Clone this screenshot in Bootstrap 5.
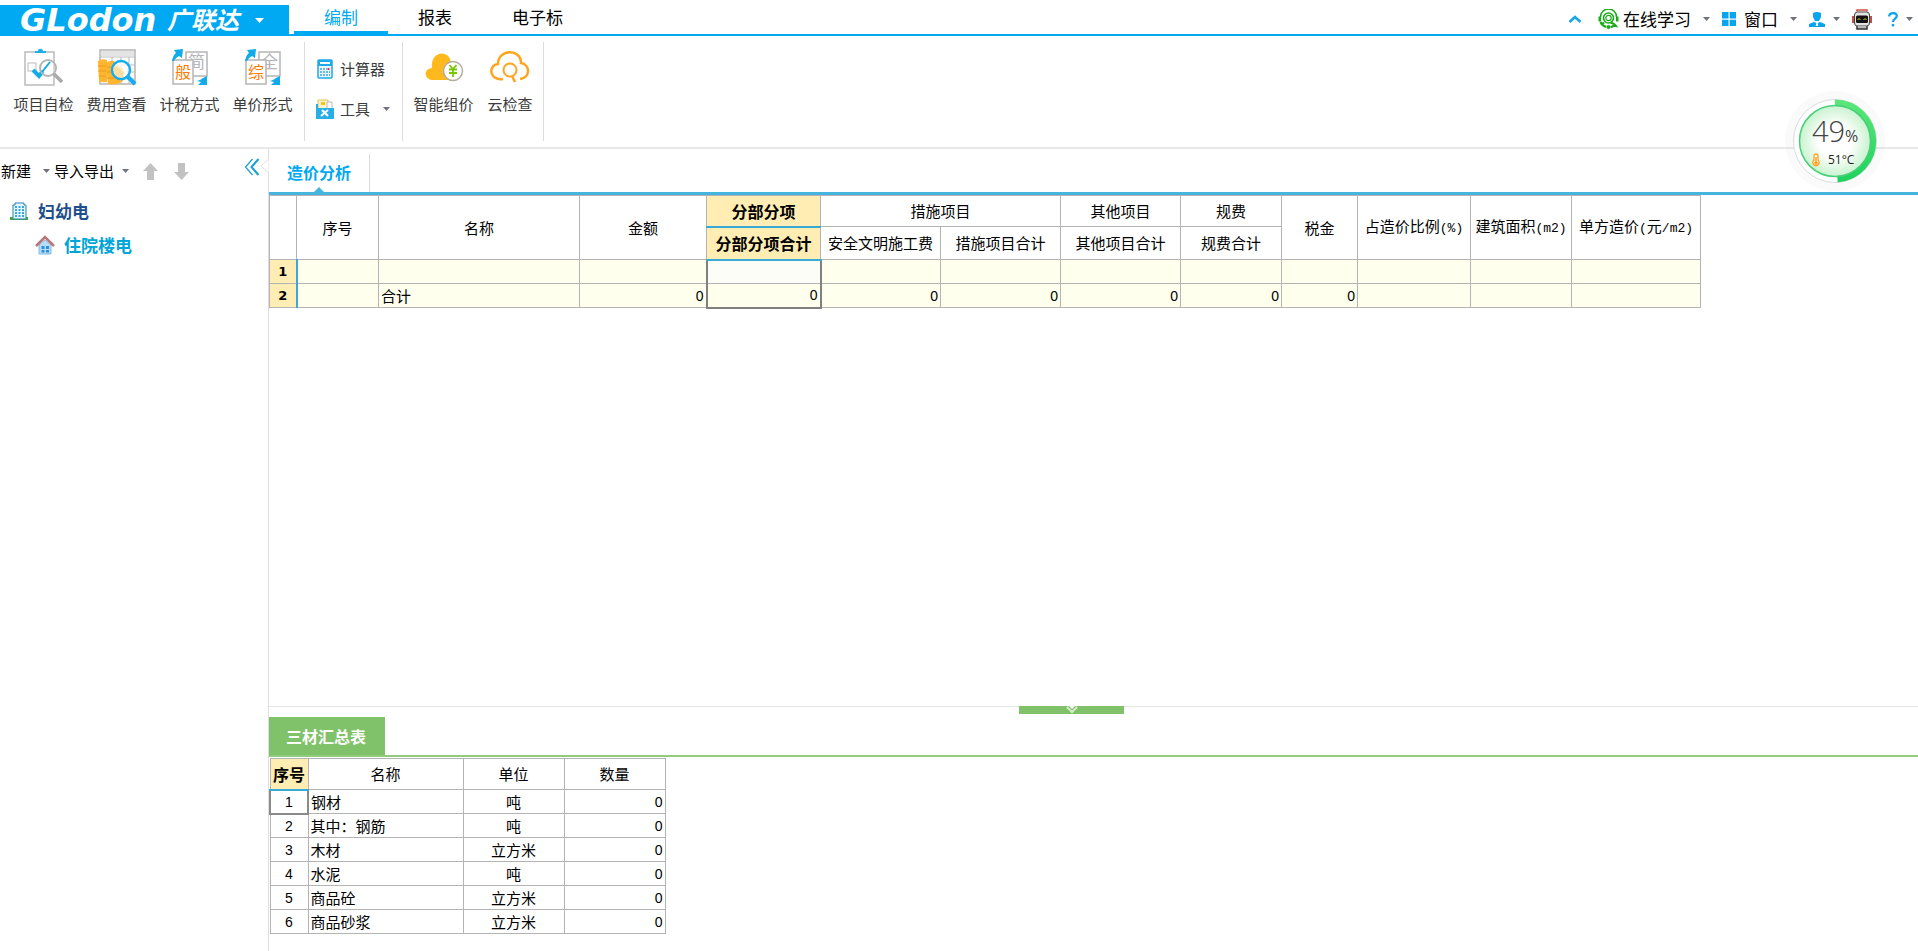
<!DOCTYPE html>
<html lang="zh-CN">
<head>
<meta charset="utf-8">
<meta name="viewport" content="width=device-width, initial-scale=1">
<title>广联达 - 造价分析</title>
<link rel="stylesheet" href="https://cdn.jsdelivr.net/npm/bootstrap@5.3.0/dist/css/bootstrap.min.css">
<style>
  :root { --brand: #00a9f1; --line: #e4e4e4; --grid: #b4b4b4; --sel: #ffedb3; }
  body { font-family: "Noto Sans CJK SC", sans-serif; font-size: 15px; line-height: 20px; color: #000; background: #fff; }
  a { color: inherit; text-decoration: none; }
  button { font: inherit; color: inherit; background: none; border: 0; padding: 0; }
  svg { display: block; flex: none; }
  .tri { width: 7px; height: 4px; flex: none; background: #6f7280; clip-path: polygon(0 0, 100% 0, 50% 100%); }
  .tri-white { width: 9px; height: 5px; background: #fff; }

  .app-head { height: 36px; border-bottom: 2px solid var(--brand); }
  .brand-btn { height: 31px; width: 289px; margin-bottom: -2px; background: var(--brand); color: #fff; padding-left: 20px; }
  .brand-latin { font: italic bold 32px/31px "DejaVu Sans", sans-serif; width: 147px; text-align: left; }
  .brand-cjk { font-size: 24px; line-height: 24px; padding-bottom: 3px; font-weight: bold; font-style: italic; }
  .main-tabs { margin-left: 5px; font-size: 17px; }
  .main-tabs a { padding: 0 30px; height: 31px; line-height: 28px; border-bottom: 3px solid transparent; }
  .main-tabs a.active { color: var(--brand); border-color: var(--brand); }
  .head-tools { font-size: 17px; height: 30px; padding-right: 5px; gap: 12px; }

  .ribbon { height: 113px; border-bottom: 2px solid #e9e9e9; padding: 6px 0; color: #3c3c3c; }
  .ribbon-group { border-right: 1px solid #dcdcdc; height: 99px; }
  .group-main { padding: 0 5px 0 7px; }
  .group-tools { width: 98px; padding: 17px 8px 0 10px; gap: 20px; }
  .group-cloud { width: 141px; padding-left: 4px; }
  .tool-lg { width: 73px; padding-top: 6px; }
  .tool-lg svg { margin-bottom: 8px; }
  .tool-narrow { width: 60px; }
  .tool-sm { height: 20px; gap: 5px; }

  .side { width: 268px; }
  .side-bar { height: 44px; padding-left: 1px; gap: 4px; }
  .side-arrows { gap: 16px; margin-left: 10px; }
  .tree { font-size: 17px; line-height: 24px; font-weight: bold; }
  .tree-root { color: #1f4e8c; padding-top: 6px; margin-bottom: 6px; }
  .tree-leaf { color: #00a5d8; padding-top: 4px; }
  .work { border-left: 1px solid #dedede; min-width: 0; }
  .work-tabs { height: 46px; padding-top: 5px; border-bottom: 3px solid #45b5e0; }
  .work-tab { width: 101px; padding-bottom: 2px; font-size: 16px; font-weight: bold; color: var(--brand); border-right: 1px solid #dcdcdc; }
  .tab-mark { bottom: 0; left: 45px; width: 10px; height: 5px; background: #45b5e0; clip-path: polygon(50% 0, 100% 100%, 0 100%); }
  .notch { right: -1px; top: 8px; }

  .sheet { table-layout: fixed; border-collapse: collapse; color: #000; margin: 0; }
  .sheet > :not(caption) > * > * { border: 1px solid var(--grid); padding: 0 2px; height: 24px; line-height: 20px; font-weight: normal; vertical-align: middle; white-space: nowrap; background: transparent; box-shadow: none; color: #000; }
  .sheet th { text-align: center; }
  .unit { font-family: "Liberation Mono", "Noto Sans CJK SC", monospace; font-size: 13px; }
  .num { font-family: "Liberation Sans", "Noto Sans CJK SC", sans-serif; font-size: 14px; }
  .cost { width: 1431px; }
  .c27 { width: 27px; } .c76 { width: 76px; } .c82 { width: 82px; } .c101 { width: 101px; }
  .c113 { width: 113px; } .c114 { width: 114px; } .c120 { width: 120px; } .c127 { width: 127px; }
  .c129 { width: 129px; } .c201 { width: 201px; } .c38 { width: 38px; } .c155 { width: 155px; }
  .sheet > thead > tr > th { height: 31px; }
  .cost > thead > tr + tr > th { height: 33px; }
  .cost > tbody > tr > td { background: #ffffee; }
  .sheet > * > tr > th.sel { background: var(--sel); font-weight: bold; font-size: 16px; border-bottom: 2px solid #3ba9d6; }
  .cost > tbody > tr > th { background: var(--sel); border-right: 2px solid #3ba9d6; font: bold 13px/20px "DejaVu Sans", sans-serif; }
  .cost > tbody > tr > td.pick { border-left: 2px solid #808080; border-right: 2px solid #808080; }
  .cost > tbody > tr:first-child > td.pick { background: #fdfdf8; }
  .cost > tbody > tr:last-child > td.pick { border-bottom: 2px solid #808080; }

  .lower { border-top: 1px solid #e4e4e4; padding-top: 10px; padding-bottom: 17px; }
  .handle { top: -1px; left: 45.5%; width: 105px; height: 8px; background: #80c269; }
  .lower-tabs { border-bottom: 2px solid #92ca7e; }
  .lower-tab { width: 116px; height: 38px; padding-right: 2px; background: #80c269; color: #fff; font-weight: bold; font-size: 16px; }
  .mats { width: 396px; margin-top: 1px; }
  .mats > tbody > tr > td.cur { border: 2px solid #8a8a8a; }

  .gauge { top: 91px; right: 33px; width: 100px; height: 100px; border-radius: 50%; background: rgba(0,0,0,.02); }
  .gauge-text { top: 24px; left: 27px; color: #444; }
  .gauge-big { font: 300 29px/32px "Open Sans", sans-serif; }
  .gauge-big small { font-size: 16px; font-weight: 400; }
  .gauge-temp { font: 12px/16px "Open Sans", sans-serif; color: #222; }
</style>
</head>
<body class="d-flex flex-column min-vh-100 position-relative">

<header class="app-head d-flex align-items-end">
  <button class="brand-btn d-flex align-items-center" type="button">
    <span class="brand-latin">GLodon</span><span class="brand-cjk">广联达</span><span class="tri tri-white ms-3"></span>
  </button>
  <nav class="main-tabs d-flex">
    <a href="#" class="active">编制</a><a href="#">报表</a><a href="#">电子标</a>
  </nav>
  <div class="head-tools d-flex align-items-center ms-auto">
    <button type="button" aria-label="收起" class="me-1"><svg width="14" height="8" viewBox="0 0 14 8"><path d="M1.500 7 7 2l5.500 5" fill="none" stroke="#19a5ec" stroke-width="2.600"/></svg></button>
    <button type="button" class="d-flex align-items-center gap-1">
      <svg width="21" height="21" viewBox="0 0 21 21" fill="none" stroke="#18ad18"><path d="M2.500 8a8 8 0 0 1 16 0" stroke-width="1.500"/><path d="M1.800 7.500v5M19.200 7.500v5" stroke-width="2.600"/><circle cx="10.500" cy="9" r="5" stroke-width="1.600"/><circle cx="10.500" cy="9" r="2.700" stroke-width="1.200"/><path d="M2.500 13c1 2.500 3 4 5.500 5M6 13.500c-1 .8-1.500 1.500-1.800 2.500M12.500 13.500c3 .8 4.500 2 5.500 3.500-2.500-.4-4 .3-5 1.500" stroke-width="2.200"/><circle cx="10.500" cy="18" r="1.600" fill="#18ad18"/></svg>
      <span>在线学习</span><span class="tri ms-2"></span>
    </button>
    <button type="button" class="d-flex align-items-center gap-2">
      <svg width="14" height="14" viewBox="0 0 14 14" fill="#08a4ee"><path d="M0 0h6.500v6.500H0zM7.700 0H14v6.500H7.700zM0 7.700h6.500V14H0zM7.700 7.700H14V14H7.700z"/></svg>
      <span>窗口</span><span class="tri ms-1"></span>
    </button>
    <button type="button" aria-label="用户" class="d-flex align-items-center gap-2">
      <svg width="16" height="15" viewBox="0 0 16 15" fill="#08a4ee"><path d="M4 1q4-2 8 0v4l-2 4H6L4 5zM0 15v-3l5-2 2.300 1-.6 3h2.600l-.6-3L11 10l5 2v3z"/></svg>
      <span class="tri"></span>
    </button>
    <button type="button" aria-label="机器人">
      <svg width="20" height="21" viewBox="0 0 20 21"><path d="M5 2.500V1h10v1.500" fill="none" stroke="#d05040" stroke-width="1.500"/><path d="M1 7v7M19 7v7" stroke="#b84030" stroke-width="1.800"/><rect x="2.500" y="3" width="15" height="14" rx="3" fill="#e4e4e4" stroke="#444"/><rect x="4" y="6.500" width="12" height="7.500" rx="1.500" fill="#111"/><path d="m5.500 11 1.500-1.500L8.500 11M11.500 11 13 9.500l1.500 1.500" fill="none" stroke="#d8d830"/><path d="M5 17v3h10v-3" fill="#bbb" stroke="#333" stroke-width="1.500"/></svg>
    </button>
    <button type="button" aria-label="帮助" class="d-flex align-items-center ms-1">
      <svg width="10" height="15" viewBox="0 0 10 15"><path d="M1.200 4.500C1.200 0 8.800 0 8.800 4c0 2.800-3.800 2.700-3.800 6" fill="none" stroke="#08a4ee" stroke-width="2.200"/><path d="M3.800 12h2.400v2.400H3.800z" fill="#08a4ee"/></svg>
      <span class="tri ms-2"></span>
    </button>
  </div>
</header>

<section class="ribbon d-flex" aria-label="工具栏">
  <div class="ribbon-group group-main d-flex align-items-start">
    <button type="button" class="tool-lg d-flex flex-column align-items-center">
      <svg width="40" height="38" viewBox="0 0 40 38"><path d="M1 4h29v33H1z" fill="#fff" stroke="#bbb" stroke-width="1.500"/><path d="M11 5V3h3c0-3 5-3 5 0h3v2z" fill="#20aee8"/><rect x="4" y="15" width="8" height="8" fill="none" stroke="#bbb"/><path d="m9 22 6 6 4-5" fill="none" stroke="#12abea" stroke-width="4"/><circle cx="24" cy="20" r="8" fill="#fff" fill-opacity=".3" stroke="#b5b5b5" stroke-width="2"/><path d="m18 24 8-10" stroke="#12abea" stroke-width="2"/><path d="m30 26 8 8" stroke="#aaa" stroke-width="3.500"/></svg>
      <span>项目自检</span>
    </button>
    <button type="button" class="tool-lg d-flex flex-column align-items-center">
      <svg width="40" height="38" viewBox="0 0 40 38"><path d="M3 2h35v34H3z" fill="#fff" stroke="#b5b5b5" stroke-width="1.500"/><path d="M4 3h33v5H4z" fill="#e4e4e4"/><path d="M3 9h35M3 17h35M3 24h35M3 31h35M15 9v27M24 9v27M32 9v27" stroke="#bbb"/><path d="M1 13q4-3 9-1v22q-6 1-8-1zM9 15q6-4 9-1l8 6v13q-7 5-15 3z" fill="#ffb52e"/><path d="M1 18h8M1 23h8M2 28h7M10 19h8M10 24h16M10 30h16" stroke="#ed9a14"/><circle cx="24" cy="22" r="9" fill="#fff" fill-opacity=".8" stroke="#14aef0" stroke-width="2.500"/><path d="M16.500 19q3-1 7 2l3 3v5q-4 1.500-7-1-3-3-3-9z" fill="#ffdda0"/><path d="m30 28 8 8" stroke="#14aef0" stroke-width="4"/></svg>
      <span>费用查看</span>
    </button>
    <button type="button" class="tool-lg d-flex flex-column align-items-center">
      <svg width="38" height="38" viewBox="0 0 38 38"><path d="M15 4h21v24H15z" fill="#fff" stroke="#b5b5b5" stroke-width="1.500"/><text x="17" y="20" font-size="17" fill="#b5b5b5">简</text><path d="M2 12h20v24H2z" fill="#fff" stroke="#b5b5b5" stroke-width="1.500"/><text x="4" y="30" font-size="16" fill="#ff7a00">般</text><path d="M1 13Q2 7 5 5L3 2l9-1-1 9-3-2q-4 2-5 5zM36 28v9h-9l3-3-4-1q4-1 6-3z" fill="#12abea"/></svg>
      <span>计税方式</span>
    </button>
    <button type="button" class="tool-lg d-flex flex-column align-items-center">
      <svg width="38" height="38" viewBox="0 0 38 38"><path d="M15 4h21v24H15z" fill="#fff" stroke="#b5b5b5" stroke-width="1.500"/><text x="17" y="20" font-size="17" fill="#b5b5b5">全</text><path d="M2 12h20v24H2z" fill="#fff" stroke="#b5b5b5" stroke-width="1.500"/><text x="4" y="30" font-size="16" fill="#ff7a00">综</text><path d="M1 13Q2 7 5 5L3 2l9-1-1 9-3-2q-4 2-5 5zM36 28v9h-9l3-3-4-1q4-1 6-3z" fill="#12abea"/></svg>
      <span>单价形式</span>
    </button>
  </div>
  <div class="ribbon-group group-tools d-flex flex-column align-items-start">
    <button type="button" class="tool-sm d-flex align-items-center">
      <svg width="20" height="20" viewBox="0 0 20 20"><rect x="3" y="1" width="14" height="18" rx="1" fill="#e8f7ff" stroke="#1ea9e8" stroke-width="1.500"/><path d="M3 1h14v6H3z" fill="#1ea9e8"/><path d="M5 3h10v2H5z" fill="#fff"/><path d="M5 10h7M5 13h10M5 16h10" stroke="#3fa8df" stroke-width="1.500" stroke-dasharray="2 1"/><path d="M12.500 9h2v2h-2z" fill="#f03030"/></svg>
      <span>计算器</span>
    </button>
    <button type="button" class="tool-sm d-flex align-items-center">
      <svg width="20" height="20" viewBox="0 0 20 20"><path d="M3 1h10v10H3z" fill="#fff5c8" stroke="#dfc05a"/><path d="M6 3h4v3H6z" fill="#ffbd20"/><path d="M12 3h5v7h-5z" fill="#fff" stroke="#bbb"/><path d="M1 5h2v4h16v11H1z" fill="#27aee8"/><path d="m6 17 7-6M7 11l6 6" stroke="#fff" stroke-width="2"/></svg>
      <span>工具</span><span class="tri ms-2"></span>
    </button>
  </div>
  <div class="ribbon-group group-cloud d-flex align-items-start">
    <button type="button" class="tool-lg d-flex flex-column align-items-center">
      <svg width="40" height="38" viewBox="0 0 40 38"><path d="M8 32C0 31-1 21 8 20 6 2 27 1 27 16c8 0 10 16 0 16z" fill="#ffb91c"/><circle cx="29" cy="23" r="9.500" fill="#fff" stroke="#b4ad9c" stroke-width="1.500"/><path d="m25.500 17 3.500 4 3.500-4M25 21.500h8M25 25h8M29 21v8" fill="none" stroke="#78c800" stroke-width="1.800"/></svg>
      <span>智能组价</span>
    </button>
    <button type="button" class="tool-lg tool-narrow d-flex flex-column align-items-center">
      <svg width="40" height="38" viewBox="0 0 40 38"><path d="M13 31C-1 33-2 17 8 16 8 1 31 0 31 15c10 2 9 15-1 16" fill="none" stroke="#ffa41c" stroke-width="2.500"/><circle cx="20" cy="22" r="6.500" fill="none" stroke="#ffa41c" stroke-width="2"/><path d="m22 28 3 6" stroke="#ffa41c" stroke-width="2.500"/></svg>
      <span>云检查</span>
    </button>
  </div>
</section>

<main class="d-flex flex-grow-1">
  <aside class="side flex-shrink-0 position-relative">
    <div class="side-bar d-flex align-items-center">
      <button type="button" class="d-flex align-items-center gap-2"><span>新建</span><span class="tri ms-1"></span></button>
      <button type="button" class="d-flex align-items-center gap-2"><span>导入导出</span><span class="tri"></span></button>
      <div class="side-arrows d-flex">
        <button type="button" aria-label="上移"><svg width="15" height="17" viewBox="0 0 15 17"><path d="m7.500 0 7.500 8h-4v9H4V8H0z" fill="#c2c2c2"/></svg></button>
        <button type="button" aria-label="下移"><svg width="15" height="17" viewBox="0 0 15 17"><path d="m7.500 17 7.500-8h-4V0H4v9H0z" fill="#c2c2c2"/></svg></button>
      </div>
      <button type="button" aria-label="折叠" class="ms-auto me-2 pb-2"><svg width="16" height="18" viewBox="0 0 16 18" fill="none" stroke="#18a0d0"><path d="M8.500 1 1.500 9l7 8" stroke-width="1.200"/><path d="m14.500 1-7 8 7 8" stroke-width="2"/></svg></button>
    </div>
    <svg class="notch position-absolute" width="9" height="18" viewBox="0 0 9 18"><path d="M8.500 0v2L1 9l7.500 7v2" fill="#fff" stroke="#dedede"/></svg>
    <nav class="tree">
      <a href="#" class="tree-root d-flex align-items-center gap-2 ps-2"><svg width="22" height="20" viewBox="0 0 22 20"><path d="M2 16h18v3H2z" fill="#45aa3c"/><path d="M5 4h2V2h9v2h2v14H5z" fill="#e5f6ff" stroke="#2a83b8"/><path d="M7 6h9M7 9h9M7 12h9M7 15h9" stroke="#38a5e0" stroke-width="2" stroke-dasharray="2 1.500"/></svg><span>妇幼电</span></a>
      <a href="#" class="tree-leaf d-flex align-items-center gap-2 ms-4 ps-2"><svg width="24" height="20" viewBox="0 0 24 20"><path d="M7 10 13 5l6 5v9H7z" fill="#b6dcf8" stroke="#86b8e0"/><path d="M4 11 13 2l9 9" fill="none" stroke="#b87878" stroke-width="2.500"/><path d="M9.500 11h3v3h-3zM14 11h3v3h-3zM9.500 15h3v2.500h-3zM14 15h3v2.500h-3z" fill="#2d8fdc"/></svg><span>住院楼电</span></a>
    </nav>
  </aside>

  <div class="work flex-grow-1 d-flex flex-column">
    <div class="work-tabs d-flex">
      <button type="button" class="work-tab position-relative">造价分析<span class="tab-mark position-absolute"></span></button>
    </div>
    <div class="flex-grow-1">
      <table class="table sheet cost">
        <colgroup><col class="c27"><col class="c82"><col class="c201"><col class="c127"><col class="c114"><col class="c120"><col class="c120"><col class="c120"><col class="c101"><col class="c76"><col class="c113"><col class="c101"><col class="c129"></colgroup>
        <thead>
          <tr><th rowspan="2"></th><th rowspan="2">序号</th><th rowspan="2">名称</th><th rowspan="2">金额</th><th class="sel">分部分项</th><th colspan="2">措施项目</th><th>其他项目</th><th>规费</th><th rowspan="2">税金</th><th rowspan="2">占造价比例<span class="unit">(%)</span></th><th rowspan="2">建筑面积<span class="unit">(m2)</span></th><th rowspan="2">单方造价<span class="unit">(</span>元<span class="unit">/m2)</span></th></tr>
          <tr><th class="sel">分部分项合计</th><th>安全文明施工费</th><th>措施项目合计</th><th>其他项目合计</th><th>规费合计</th></tr>
        </thead>
        <tbody>
          <tr><th>1</th><td></td><td></td><td></td><td class="pick"></td><td></td><td></td><td></td><td></td><td></td><td></td><td></td><td></td></tr>
          <tr class="text-end"><th>2</th><td></td><td class="text-start">合计</td><td class="num">0</td><td class="num pick">0</td><td class="num">0</td><td class="num">0</td><td class="num">0</td><td class="num">0</td><td class="num">0</td><td></td><td></td><td></td></tr>
        </tbody>
      </table>
    </div>
    <section class="lower position-relative">
      <button type="button" aria-label="收起面板" class="handle position-absolute d-flex justify-content-center"><svg width="12" height="8" viewBox="0 0 12 8"><path d="M3 0h6L6 3z" fill="#fff"/><path d="m1 1 5 5 5-5" fill="none" stroke="#d5edca" stroke-width="2"/></svg></button>
      <div class="lower-tabs"><button type="button" class="lower-tab d-block">三材汇总表</button></div>
      <table class="table sheet mats">
        <colgroup><col class="c38"><col class="c155"><col class="c101"><col class="c101"></colgroup>
        <thead><tr><th class="sel px-0">序号</th><th>名称</th><th>单位</th><th>数量</th></tr></thead>
        <tbody>
          <tr><td class="num text-center cur">1</td><td>钢材</td><td class="text-center">吨</td><td class="num text-end">0</td></tr>
          <tr><td class="num text-center">2</td><td>其中：钢筋</td><td class="text-center">吨</td><td class="num text-end">0</td></tr>
          <tr><td class="num text-center">3</td><td>木材</td><td class="text-center">立方米</td><td class="num text-end">0</td></tr>
          <tr><td class="num text-center">4</td><td>水泥</td><td class="text-center">吨</td><td class="num text-end">0</td></tr>
          <tr><td class="num text-center">5</td><td>商品砼</td><td class="text-center">立方米</td><td class="num text-end">0</td></tr>
          <tr><td class="num text-center">6</td><td>商品砂浆</td><td class="text-center">立方米</td><td class="num text-end">0</td></tr>
        </tbody>
      </table>
    </section>
  </div>
</main>

<div class="gauge position-absolute">
  <svg width="100" height="100" viewBox="0 0 100 100">
    <defs><radialGradient id="glow"><stop offset=".45" stop-color="#fff"/><stop offset="1" stop-color="#c9f3cf"/></radialGradient>
    <linearGradient id="arc" x2="0" y2="1"><stop stop-color="#5ae678"/><stop offset="1" stop-color="#1fd35e"/></linearGradient></defs>
    <circle cx="50" cy="50" r="41.500" fill="#fff" stroke="#dcdcdc"/>
    <path d="M50 11.500A38.500 38.500 0 0 1 52.500 88.400" fill="none" stroke="url(#arc)" stroke-width="6"/>
    <circle cx="50" cy="50" r="35.500" fill="url(#glow)" stroke="#45cf78" stroke-width="1.500"/>
  </svg>
  <div class="gauge-text position-absolute">
    <div class="gauge-big">49<small>%</small></div>
    <div class="gauge-temp d-flex align-items-center gap-2"><svg width="8" height="14" viewBox="0 0 8 14"><path d="M2 7V3q0-2 2-2t2 2v4q2 2 .5 4.500-2.500 2.500-5 0Q0 9 2 7z" fill="#fff" stroke="#ffa01c" stroke-width="1.300"/><path d="M4 4v6" stroke="#ffa01c" stroke-width="1.500"/><circle cx="4" cy="10" r="1.800" fill="#ffa01c"/></svg>51°C</div>
  </div>
</div>

<script src="https://cdn.jsdelivr.net/npm/bootstrap@5.3.0/dist/js/bootstrap.bundle.min.js"></script>
</body>
</html>
